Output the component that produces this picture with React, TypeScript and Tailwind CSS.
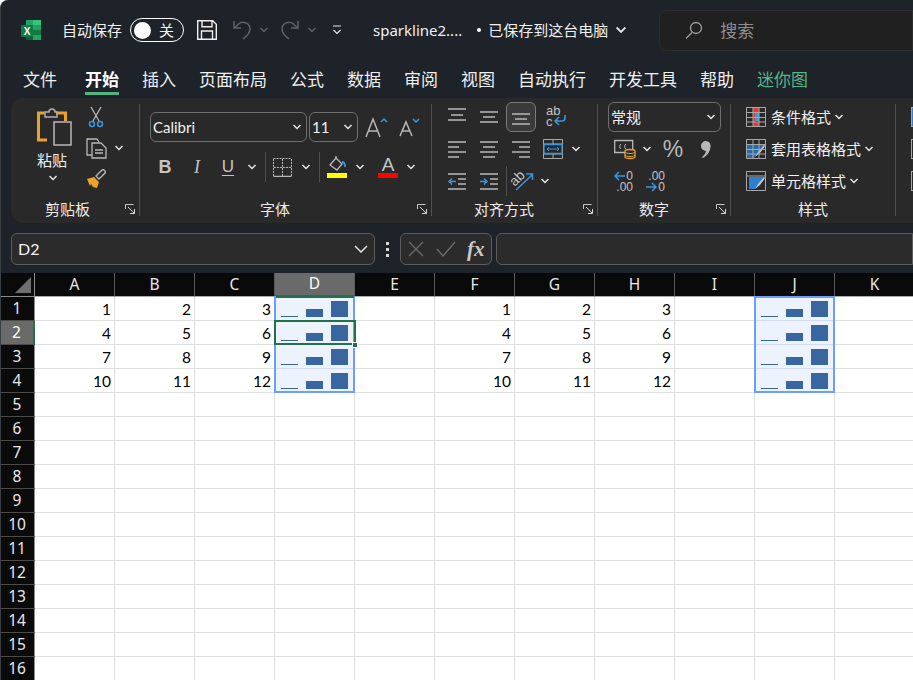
import type { ReactNode } from "react";

const tabs = ["文件", "开始", "插入", "页面布局", "公式", "数据", "审阅", "视图", "自动执行", "开发工具", "帮助"];
const columns = ["A", "B", "C", "D", "E", "F", "G", "H", "I", "J", "K"];
const rowNumbers = Array.from({ length: 16 }, (_, i) => i + 1);
const data = [
	[1, 2, 3],
	[4, 5, 6],
	[7, 8, 9],
	[10, 11, 12],
];

const gray = "#b8b8b8";
const blue = "#3a96dd";

function Chev({ className = "", color = "#e4e4e4" }: { className?: string; color?: string }) {
	return (
		<svg width="10" height="6" viewBox="0 0 10 6" className={`shrink-0 ${className}`} fill="none" stroke={color} strokeWidth="1.5">
			<path d="M1.5 1l3.5 3.5L8.5 1" />
		</svg>
	);
}

function Launcher() {
	return (
		<svg width="11" height="11" viewBox="0 0 11 11" className="shrink-0" fill="none" stroke="#c8c8c8" strokeWidth="1">
			<path d="M.5 5V.5h8" />
			<path d="M3 3l6 6M5 9.5h4.5V5" stroke="#d8d8d8" />
		</svg>
	);
}

function Lines({ rows }: { rows: [number, number, number][] }) {
	return (
		<svg width="20" height="20" viewBox="0 0 20 20" fill="none" stroke={gray} strokeWidth="1.5">
			{rows.map(([x1, x2, y]) => (
				<path key={y} d={`M${x1} ${y}H${x2}`} />
			))}
		</svg>
	);
}

function Group({ width, label, labelLeft, launcher = true, children }: { width: number; label: string; labelLeft: number; launcher?: boolean; children: ReactNode }) {
	return (
		<div className="h-full shrink-0 flex flex-col" style={{ width }}>
			<div className="flex-1 min-h-0">{children}</div>
			<div className="h-[25px] mb-[1px] flex items-center pr-[3px] text-[15px] text-[#ececec]">
				<span style={{ marginLeft: labelLeft }}>{label}</span>
				{launcher && <span className="ml-auto flex"><Launcher /></span>}
			</div>
		</div>
	);
}

function Sep() {
	return <div className="w-px h-[112px] bg-[#4f4f4f] shrink-0 self-center mb-[2px]" />;
}

function VSep() {
	return <div className="w-px h-[30px] bg-[#4f4f4f] shrink-0" />;
}

function Combo({ width, children }: { width: number; children: ReactNode }) {
	return (
		<div className="h-[30px] shrink-0 border border-[#6e6e6e] rounded-md flex items-center justify-between pl-[2px] pr-[4px] text-[15px] text-[#f2f2f2]" style={{ width }}>
			<span>{children}</span>
			<Chev />
		</div>
	);
}

function Slot({ width = 32, children }: { width?: number; children: ReactNode }) {
	return <div className="h-[30px] shrink-0 flex items-center justify-center" style={{ width }}>{children}</div>;
}

function StyleRow({ icon, label }: { icon: ReactNode; label: string }) {
	return (
		<div className="h-[32px] flex items-center text-[15px] text-[#f0f0f0]">
			{icon}
			<span className="ml-[5px]">{label}</span>
			<Chev className="ml-[3px]" />
		</div>
	);
}

function GridIcon({ children }: { children: ReactNode }) {
	return (
		<svg width="20" height="20" viewBox="0 0 20 20" fill="none" className="shrink-0">
			{children}
			<path d="M.5.5h19v19H.5zM7 .5v19M13 .5v19M.5 5.5h19M.5 10.5h19M.5 15h19" stroke="#a8a8a8" />
		</svg>
	);
}

function Spark() {
	return (
		<div className="h-full flex items-end gap-2 pl-[6px] pb-[3px]">
			<div className="w-[17px] h-px bg-[#3a669f]" />
			<div className="w-[17px] h-2 bg-[#3a669f]" />
			<div className="w-[17px] h-4 bg-[#3a669f]" />
		</div>
	);
}

function Clipboard() {
	return (
		<div className="h-full flex text-[#f0f0f0]">
			<div className="w-[70px] pl-[26px] pt-[8px] flex flex-col">
				<svg width="36" height="40" viewBox="0 0 36 40" fill="none">
					<path d="M19 6h9.5v8M10 33H1.500V6h6" stroke="#eaa22b" strokeWidth="3" />
					<path d="M8 10V5h4a3 3 0 0 1 6 0h2v5z" stroke="#b0b0b0" strokeWidth="1.500" />
					<path d="M17 15h17v23H17z" stroke="#b8b8b8" strokeWidth="1.500" />
				</svg>
				<span className="text-[15px] leading-[20px] mt-[3px]">粘贴</span>
				<Chev className="ml-[11px] mt-[5px]" />
			</div>
			<div className="flex flex-col pt-[3px]">
				<Slot width={30}>
					<svg width="16" height="22" viewBox="0 0 16 22" fill="none">
						<path d="M3 1l8 14M13 1L5 15" stroke={gray} strokeWidth="1.300" />
						<circle cx="4" cy="18" r="2.500" stroke={blue} strokeWidth="1.500" />
						<circle cx="12" cy="18" r="2.500" stroke={blue} strokeWidth="1.500" />
					</svg>
				</Slot>
				<div className="flex items-center h-[32px]">
					<Slot width={30}>
						<svg width="21" height="21" viewBox="0 0 21 21" fill="none" stroke={gray} strokeWidth="1.300">
							<path d="M6 17H1V1h10l2 3" />
							<path d="M6 5h9l5 5v10H6zM9 12h8M9 15h8" />
						</svg>
					</Slot>
					<Chev className="ml-[3px]" />
				</div>
				<Slot width={30}>
					<svg width="21" height="20" viewBox="0 0 21 20" fill="none">
						<path d="M1 10l7-2 5 5-2 6-4-1-2-3-1 2z" fill="#eaa22b" />
						<path d="M10 7l3 3 6-6c1-2-1-4-3-3z" stroke={gray} strokeWidth="1.400" />
					</svg>
				</Slot>
			</div>
		</div>
	);
}

function FontGroup() {
	return (
		<div className="pl-[10px] pt-[13px] text-[#f0f0f0]">
			<div className="flex items-center gap-[2px]">
				<div className="[font-family:Lato,sans-serif] text-[16px] flex"><Combo width={157}>Calibri</Combo></div>
				<div className="[font-family:Lato,sans-serif] flex"><Combo width={49}>11</Combo></div>
				<Slot width={34}>
					<svg width="24" height="22" viewBox="0 0 24 22" fill="none" stroke={gray} strokeWidth="1.500">
						<path d="M1 21L8 3l7 18M4 15h8" />
						<path d="M16 6l3-3 3 3" stroke={blue} />
					</svg>
				</Slot>
				<Slot width={26}>
					<svg width="22" height="20" viewBox="0 0 22 20" fill="none" stroke={gray} strokeWidth="1.500">
						<path d="M2 19L8 5l6 14M4.500 14h7" />
						<path d="M15 2l3 3 3-3" stroke={blue} />
					</svg>
				</Slot>
			</div>
			<div className="flex items-center mt-[10px] h-[30px]">
				<Slot width={30}><span className="[font-family:'Liberation_Sans',sans-serif] font-bold text-[18px] text-[#c4c4c4]">B</span></Slot>
				<Slot width={34}><span className="[font-family:'Liberation_Serif',serif] italic text-[18px] text-[#c4c4c4]">I</span></Slot>
				<Slot width={28}><span className="[font-family:'Liberation_Sans',sans-serif] underline underline-offset-[3px] text-[17px] text-[#c4c4c4]">U</span></Slot>
				<Chev className="ml-[5px]" />
				<div className="w-[8px]" />
				<VSep />
				<Slot width={32}>
					<svg width="19" height="19" viewBox="0 0 19 19" fill="none" stroke={gray}>
						<path d="M.5 18.500h18" strokeWidth="1.500" />
						<path d="M.5 1v17M18.500 1v17M.5.500h18M9.500 1v17M1 9.500h17" strokeDasharray="2 1" />
					</svg>
				</Slot>
				<Chev className="ml-[3px]" />
				<div className="w-[8px]" />
				<VSep />
				<div className="w-[7px]" />
				<div className="w-[20px] flex flex-col items-center">
					<svg width="20" height="17" viewBox="0 0 20 17" fill="none" stroke={gray} strokeWidth="1.300">
						<path d="M3 9l6-7 6 6-5 6z" />
						<path d="M9 2V0" />
						<path d="M15 6c2 0 3 2 3 5" stroke={blue} strokeWidth="1.800" />
					</svg>
					<div className="w-[20px] h-[5px] bg-[#ffff00]" />
				</div>
				<Chev className="ml-[8px]" />
				<div className="w-[13px]" />
				<div className="w-[20px] flex flex-col items-center">
					<span className="[font-family:'Liberation_Sans',sans-serif] text-[19px] leading-[17px] text-[#c4c4c4]">A</span>
					<div className="w-[20px] h-[5px] bg-[#ff0000]" />
				</div>
				<Chev className="ml-[8px]" />
			</div>
		</div>
	);
}

function AlignGroup() {
	return (
		<div className="pl-[9px] pt-[3px]">
			<div className="flex items-center h-[30px] mb-[1px]">
				<Slot><Lines rows={[[1, 19, 2], [4, 16, 8], [1, 19, 13]]} /></Slot>
				<Slot><Lines rows={[[1, 19, 5], [4, 16, 10], [1, 19, 15]]} /></Slot>
				<div className="w-[30px] h-[30px] mx-px border border-[#7a7a7a] bg-[#3a3a3a] rounded-md flex items-center justify-center">
					<Lines rows={[[1, 19, 7], [4, 16, 12], [1, 19, 17]]} />
				</div>
				<Slot>
					<div className="relative w-[20px] h-[24px] [font-family:'Liberation_Sans',sans-serif] text-[13px] leading-[11px] text-[#c4c4c4] pl-[3px]">
						ab
						<br />c
						<svg width="14" height="12" viewBox="0 0 14 12" fill="none" stroke={blue} strokeWidth="1.600" className="absolute left-[10px] top-[10px]">
							<path d="M12 0v3a3 3 0 0 1-3 3H2M6 2L2 6l4 4" />
						</svg>
					</div>
				</Slot>
			</div>
			<div className="flex items-center h-[32px]">
				<Slot><Lines rows={[[1, 19, 3], [1, 12, 8], [1, 19, 13], [1, 12, 18]]} /></Slot>
				<Slot><Lines rows={[[1, 19, 3], [4, 16, 8], [1, 19, 13], [4, 16, 18]]} /></Slot>
				<Slot><Lines rows={[[1, 19, 3], [8, 19, 8], [1, 19, 13], [8, 19, 18]]} /></Slot>
				<Slot>
					<svg width="20" height="20" viewBox="0 0 20 20" fill="none">
						<path d="M.5.500h19v19H.5zM.5 5h19M.5 15h19M10 .5V5M10 15v4.500" stroke="#a8a8a8" />
						<path d="M1 5.500h18v9H1z" stroke={blue} strokeWidth="1.300" />
						<path d="M4 10h12M6 8l-2 2 2 2M14 8l2 2-2 2" stroke={blue} />
					</svg>
				</Slot>
				<Chev className="ml-[2px]" />
			</div>
			<div className="flex items-center h-[32px]">
				<Slot>
					<svg width="20" height="20" viewBox="0 0 20 20" fill="none" strokeWidth="1.500">
						<path d="M1 3h18M11 8h8M11 13h8M1 18h18" stroke={gray} />
						<path d="M9 10.500H2M5 7.500l-3 3 3 3" stroke={blue} />
					</svg>
				</Slot>
				<Slot>
					<svg width="20" height="20" viewBox="0 0 20 20" fill="none" strokeWidth="1.500">
						<path d="M1 3h18M11 8h8M11 13h8M1 18h18" stroke={gray} />
						<path d="M1 10.500h7M5 7.500l3 3-3 3" stroke={blue} />
					</svg>
				</Slot>
				<div className="w-[1px] h-[30px] ml-[1px] bg-[#4f4f4f]" />
				<Slot width={30}>
					<div className="relative w-[22px] h-[22px]">
						<span className="absolute left-[-2px] top-[1px] -rotate-45 [font-family:'Liberation_Sans',sans-serif] text-[14px] leading-[14px] text-[#c4c4c4]">ab</span>
						<svg width="22" height="22" viewBox="0 0 22 22" fill="none" stroke={blue} strokeWidth="1.500" className="absolute left-[2px] top-0">
							<path d="M3 20L19 5M13 4h6.500v6" />
						</svg>
					</div>
				</Slot>
				<Chev className="ml-[3px]" />
			</div>
		</div>
	);
}

function NumberGroup() {
	return (
		<div className="pl-[10px] pt-[3px] text-[#c4c4c4]">
			<Combo width={113}>常规</Combo>
			<div className="flex items-center h-[32px] mt-[1px]">
				<div className="w-[36px] flex justify-center">
					<svg width="24" height="21" viewBox="0 0 24 21" fill="none">
						<path d="M.7 1.500h18v12H.7z" stroke={gray} strokeWidth="1.300" />
						<path d="M7 5a3 3 0 0 0 0 5M12 5a3 3 0 0 0 0 5" stroke={gray} />
						<path d="M11 12c0-2 10-2 10 0v6c0 2-10 2-10 0z" fill="#2b2b2b" stroke="#eaa22b" strokeWidth="1.300" />
						<path d="M11 13c0 2 10 2 10 0M11 16c0 2 10 2 10 0" stroke="#eaa22b" />
					</svg>
				</div>
				<Chev className="ml-[-2px]" />
				<span className="w-[26px] ml-[8px] text-center [font-family:'Liberation_Sans',sans-serif] text-[23px] leading-none text-[#b8b8b8]">%</span>
				<svg width="10" height="17" viewBox="0 0 10 17" className="ml-[15px]">
					<path d="M5 0a4.500 4.500 0 0 1 4.500 5c0 5-3 9.500-7.500 12l-1-1c2-1.500 3.500-3.500 4-6a4.700 4.700 0 1 1 0-10z" fill="#b8b8b8" />
				</svg>
			</div>
			<div className="flex items-center h-[32px] pl-[5px] [font-family:'Liberation_Sans',sans-serif] text-[12px] leading-[10px]">
				<div className="relative w-[20px] h-[21px] text-right">
					<div>0</div>
					<div className="mt-[1px]">.00</div>
					<svg width="13" height="10" viewBox="0 0 13 10" fill="none" stroke={blue} strokeWidth="1.500" className="absolute left-0 top-0">
						<path d="M12 5H2M6 1L2 5l4 4" />
					</svg>
				</div>
				<div className="relative w-[20px] h-[21px] ml-[12px] text-right">
					<div>.00</div>
					<div className="mt-[1px]">0</div>
					<svg width="13" height="10" viewBox="0 0 13 10" fill="none" stroke={blue} strokeWidth="1.500" className="absolute left-0 top-[11px]">
						<path d="M1 5h10M7 1l4 4-4 4" />
					</svg>
				</div>
			</div>
		</div>
	);
}

function StylesGroup() {
	return (
		<div className="pl-[15px] pt-[2px]">
			<StyleRow
				label="条件格式"
				icon={
					<GridIcon>
						<path d="M7 1h6v4H7zM7 15h6v4H7z" fill="#e53935" />
						<path d="M7 5h2v10H7z" fill="#e53935" />
						<path d="M9 6h4v8H9z" fill={blue} />
					</GridIcon>
				}
			/>
			<StyleRow
				label="套用表格格式"
				icon={
					<GridIcon>
						<path d="M1 5h18v3L8 19H1z" fill="#2b6aa8" />
						<path d="M9 18l3-5 6-7 1 1-5 7z" fill="#c8c8c8" />
					</GridIcon>
				}
			/>
			<StyleRow
				label="单元格样式"
				icon={
					<svg width="20" height="20" viewBox="0 0 20 20" fill="none" className="shrink-0">
						<path d="M.5.500h19v19H.5zM.5 5h19" stroke="#a8a8a8" />
						<path d="M3 6h15v3L9 18H3z" fill="#2f7fd0" />
						<path d="M9 18l3-5 6-7 1 1-5 7z" fill="#c8c8c8" />
					</svg>
				}
			/>
		</div>
	);
}

function Sheet() {
	return (
		<div className="relative grid grid-cols-[35px_repeat(11,80px)] auto-rows-[24px] w-[915px] [font-family:Lato,sans-serif]">
			<div className="bg-[#0a0a0a] border-r border-b border-[#8c8c8c] flex items-end justify-end pr-[3px] pb-[3px]">
				<svg width="16" height="16" viewBox="0 0 16 16">
					<path d="M16 0v16H0z" fill="#6f6f6f" />
				</svg>
			</div>
			{columns.map((c) => (
				<div
					key={c}
					className={`[font-family:'Noto_Sans',sans-serif] flex items-center justify-center text-[15.5px] border-r border-[#5a5a5a] ${c === "D" ? "bg-[#6a6a6a] text-white border-b-2 border-b-[#217346]" : "bg-[#0a0a0a] text-[#e8e8e8] border-b border-b-[#aaaaaa]"}`}
				>
					{c}
				</div>
			))}
			{rowNumbers.map((r) => (
				<div key={r} className="contents">
					<div
						className={`[font-family:'Noto_Sans',sans-serif] flex items-center justify-center text-[15.5px] border-b border-[#4a4a4a] ${r === 2 ? "bg-[#6a6a6a] text-white border-r-2 border-r-[#217346]" : "bg-[#0a0a0a] text-[#e8e8e8] border-r border-r-[#8c8c8c]"}`}
					>
						{r}
					</div>
					{columns.map((c, ci) => {
						const row = data[r - 1];
						const left = row && ci < 3 ? row[ci] : null;
						const right = row && ci >= 5 && ci < 8 ? row[ci - 5] : null;
						const value = left ?? right;
						const spark = r <= 4 && (c === "D" || c === "J");
						return (
							<div
								key={c}
								className={`border-r border-b text-[15.5px] text-right pr-[3px] leading-[25px] text-black ${spark ? "bg-[#edf3fc] border-[#d3dcea]" : "bg-white border-[#dfdfdf]"}`}
							>
								{spark ? <Spark /> : value}
							</div>
						);
					})}
				</div>
			))}
			{/* selection overlays */}
			<div className="absolute left-[274px] top-[23px] w-[81px] h-[97px] border-2 border-[#6b9eff] pointer-events-none" />
			<div className="absolute left-[276px] top-[23px] w-[78px] h-[2px] bg-[#217346] pointer-events-none" />
			<div className="absolute left-[754px] top-[23px] w-[81px] h-[97px] border-2 border-[#6b9eff] pointer-events-none" />
			<div className="absolute left-[274px] top-[47px] w-[82px] h-[25px] border-2 border-[#217346] pointer-events-none" />
			<div className="absolute left-[352px] top-[69px] w-[6px] h-[6px] bg-[#217346] border border-white pointer-events-none" />
		</div>
	);
}

export default function App() {
	return (
		<div className="w-[913px] h-[680px] overflow-hidden bg-[#1d2329] border-l border-[#3a3f44] rounded-tl-lg [font-family:'Noto_Sans_CJK_SC',sans-serif] text-[#f0f0f0]">
			{/* title bar */}
			<div className="h-[60px] flex items-center pl-[20px] text-[15px]">
				<svg width="20" height="20" viewBox="0 0 20 20" className="shrink-0">
					<path d="M5 0h15v20H5z" fill="#21a366" />
					<path d="M12 0h8v5h-8z" fill="#33c481" />
					<path d="M12 10h8v5h-8z" fill="#107c41" />
					<path d="M5 10h7v10H5z" fill="#185c37" />
					<rect x="0" y="5" width="12" height="12" rx="1" fill="#107c41" />
					<text x="6" y="14.500" textAnchor="middle" fontSize="10" fontWeight="700" fill="#fff" fontFamily="Liberation Sans, sans-serif">X</text>
				</svg>
				<span className="ml-[21px]">自动保存</span>
				<div className="ml-[8px] w-[54px] h-[24px] shrink-0 rounded-full border border-white flex items-center pl-[3px] text-[15px]">
					<div className="w-[17px] h-[17px] rounded-full bg-white" />
					<span className="ml-[8px]">关</span>
				</div>
				<svg width="20" height="20" viewBox="0 0 20 20" fill="none" stroke="#f0f0f0" strokeWidth="1.400" className="ml-[13px] shrink-0">
					<path d="M.7.700h15l3.600 3.600v15H.7zM5 .7v6h10v-6M4.500 19.300V11h11v8.300" />
				</svg>
				<svg width="18" height="20" viewBox="0 0 18 20" fill="none" stroke="#5f6366" strokeWidth="1.500" className="ml-[16px] shrink-0">
					<path d="M1 1v7h7M1.500 8L6 3.500C10 .5 17 3 17 9c0 4-3 7-7 10" />
				</svg>
				<Chev className="ml-[8px]" color="#5f6366" />
				<svg width="18" height="20" viewBox="0 0 18 20" fill="none" stroke="#5f6366" strokeWidth="1.500" className="ml-[12px] shrink-0">
					<path d="M17 1v7h-7M16.500 8L12 3.500C8 .5 1 3 1 9c0 4 3 7 7 10" />
				</svg>
				<Chev className="ml-[8px]" color="#5f6366" />
				<svg width="10" height="10" viewBox="0 0 10 10" fill="none" stroke="#e8e8e8" strokeWidth="1.200" className="ml-[15px] shrink-0">
					<path d="M1 1h8M1.500 5L5 8.500 8.500 5" />
				</svg>
				<span className="ml-[31px] [font-family:'Noto_Sans',sans-serif] text-[15px]">sparkline2....</span>
				<span className="ml-[15px] w-[4px] h-[4px] rounded-full bg-white shrink-0" />
				<span className="ml-[7px] whitespace-nowrap">已保存到这台电脑</span>
				<Chev className="ml-[8px] scale-125" />
				<div className="ml-[33px] flex-1 h-[41px] bg-[#202020] border border-[#2c2c2c] rounded-l-lg flex items-center pl-[25px] text-[#8e8e8e] text-[17px]">
					<svg width="18" height="18" viewBox="0 0 18 18" fill="none" stroke="#a0a0a0" strokeWidth="1.300" className="shrink-0">
						<circle cx="11" cy="7" r="5.500" />
						<path d="M7 11.500L1 17.500" />
					</svg>
					<span className="ml-[17px]">搜索</span>
				</div>
			</div>
			{/* tabs */}
			<div className="h-[38px] flex items-start gap-[23px] pl-[22px] text-[17px] leading-[38px]">
				{tabs.map((t, i) => (
					<div key={t} className={`h-[35px] whitespace-nowrap ${i === 0 ? "mr-[5px]" : ""} ${t === "开始" ? "font-bold text-white border-b-[3px] border-[#4fb57c]" : ""}`}>
						{t}
					</div>
				))}
				<div className="h-[35px] whitespace-nowrap text-[#52b788]">迷你图</div>
			</div>
			{/* ribbon */}
			<div className="ml-[10px] h-[125px] bg-[#292929] rounded-l-xl flex items-stretch overflow-hidden pt-[1px]">
				<Group width={128} label="剪贴板" labelLeft={34}><Clipboard /></Group>
				<Sep />
				<Group width={291} label="字体" labelLeft={120}><FontGroup /></Group>
				<Sep />
				<Group width={165} label="对齐方式" labelLeft={42}><AlignGroup /></Group>
				<Sep />
				<Group width={132} label="数字" labelLeft={41}><NumberGroup /></Group>
				<Sep />
				<Group width={164} label="样式" labelLeft={67} launcher={false}><StylesGroup /></Group>
				<Sep />
				<div className="pl-[15px] pt-[8px] flex flex-col gap-[12px] shrink-0">
					<div className="w-[20px] h-[20px] border border-[#a8a8a8] bg-[#2f7fd0]" />
					<div className="w-[20px] h-[20px] border border-[#a8a8a8]" />
					<div className="w-[20px] h-[20px] border border-[#a8a8a8]" />
				</div>
			</div>
			{/* formula bar */}
			<div className="h-[50px] pt-[2px] flex items-center pl-[10px] gap-[4px]">
				<div className="w-[364px] h-[32px] shrink-0 bg-[#2b2b2b] border border-[#5c5c5c] rounded-md flex items-center justify-between pl-[6px] pr-[6px] [font-family:Lato,sans-serif] text-[16px] text-[#f4f4f4]">
					<span>D2</span>
					<svg width="14" height="8" viewBox="0 0 14 8" fill="none" stroke="#e4e4e4" strokeWidth="1.500"><path d="M1 1l6 6 6-6" /></svg>
				</div>
				<div className="w-[17px] flex flex-col items-center gap-[3px] shrink-0">
					<span className="w-[3px] h-[3px] bg-[#d8d8d8]" />
					<span className="w-[3px] h-[3px] bg-[#d8d8d8]" />
					<span className="w-[3px] h-[3px] bg-[#d8d8d8]" />
				</div>
				<div className="w-[92px] h-[32px] shrink-0 bg-[#2b2b2b] border border-[#5c5c5c] rounded-md flex items-center pl-[7px]">
					<svg width="16" height="16" viewBox="0 0 16 16" fill="none" stroke="#6e6e6e" strokeWidth="1.300"><path d="M1 1l14 14M15 1L1 15" /></svg>
					<svg width="20" height="16" viewBox="0 0 20 16" fill="none" stroke="#6e6e6e" strokeWidth="1.300" className="ml-[12px]"><path d="M1 8l6 7L19 1" /></svg>
					<span className="ml-[11px] [font-family:'Liberation_Serif',serif] italic font-bold text-[21px] leading-none text-[#c8c8c8]">fx</span>
				</div>
				<div className="flex-1 h-[32px] bg-[#2b2b2b] border border-[#5c5c5c] rounded-l-md" />
			</div>
			<div className="overflow-hidden -ml-px"><Sheet /></div>
		</div>
	);
}
